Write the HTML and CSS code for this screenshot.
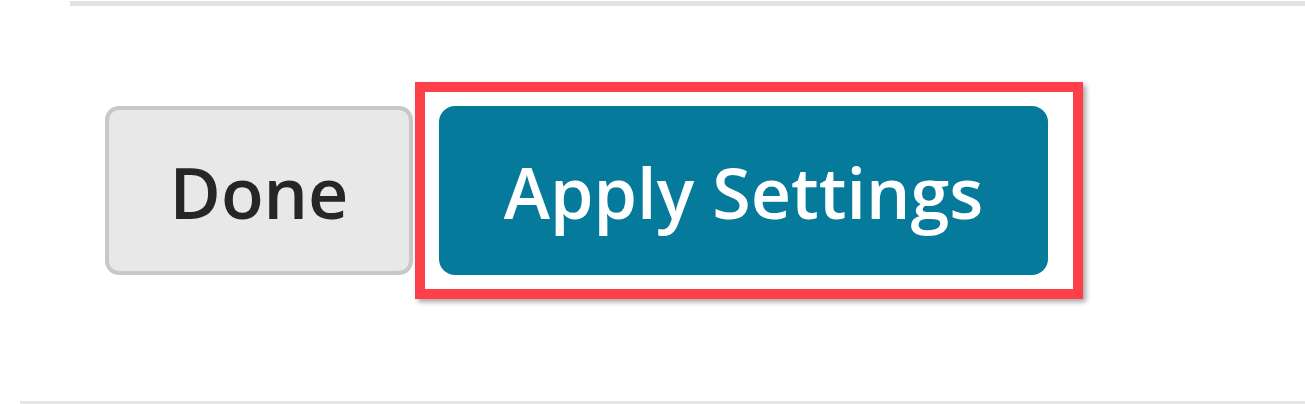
FILE: index.html
```html
<!DOCTYPE html>
<html lang="en">
<head>
<meta charset="utf-8">
<title>Settings actions</title>
<link rel="stylesheet" href="styles.css">
</head>
<body>
  <div class="rule rule-top"></div>
  <div class="actions">
    <button class="btn btn-done" type="button">Done</button>
    <div class="highlight">
      <button class="btn btn-apply" type="button">Apply Settings</button>
    </div>
  </div>
  <div class="rule rule-bottom"></div>
</body>
</html>
```
FILE: styles.css
```css
html, body {
  margin: 0;
  padding: 0;
  background: #ffffff;
}

body {
  width: 1305px;
  height: 404px;
  overflow: hidden;
  font-family: "Open Sans", "Liberation Sans", sans-serif;
}

.rule {
  background: #e3e3e3;
}

.rule-top {
  margin: 1px 0 0 70px;
  height: 5px;
}

.actions {
  display: flex;
  align-items: center;
  gap: 2px;
  margin-top: 76px;
  padding-left: 105px;
}

.btn {
  box-sizing: border-box;
  display: flex;
  align-items: center;
  justify-content: center;
  font-family: "Open Sans", "Liberation Sans", sans-serif;
  font-weight: 600;
  font-size: 70px;
  line-height: 1;
  padding: 0;
  cursor: pointer;
}

.btn-done {
  width: 308px;
  height: 169px;
  background: #e8e8e8;
  color: #262626;
  border: 4px solid #c8c8c8;
  border-radius: 14px;
  padding-top: 2px;
}

.highlight {
  border: 10px solid #fc3f48;
  padding: 14px 25px 14px 14px;
  box-shadow: 3px 3px 5px rgba(0, 0, 0, 0.35);
}

.btn-apply {
  width: 609px;
  height: 169px;
  background: #067a9b;
  color: #ffffff;
  border: none;
  border-radius: 16px;
  padding-top: 3px;
}

.rule-bottom {
  margin: 102px 0 0 20px;
  height: 3px;
  background: #e6e6e6;
}
```
